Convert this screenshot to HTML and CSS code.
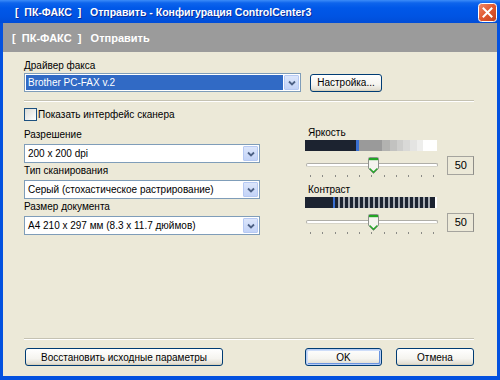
FILE: index.html
```html
<!DOCTYPE html>
<html lang="ru">
<head>
<meta charset="utf-8">
<title>ПК-ФАКС</title>
<link rel="stylesheet" href="styles.css">
</head>
<body>
<div class="window">
  <div class="titlebar">
    <span class="title">[  ПК-ФАКС  ]   Отправить - Конфигурация ControlCenter3</span>
    <span class="close">
      <svg width="19" height="19" viewBox="0 0 19 19">
        <defs>
          <linearGradient id="cg" x1="0" y1="0" x2="1" y2="1">
            <stop offset="0" stop-color="#F08A6C"/>
            <stop offset="0.5" stop-color="#E0582F"/>
            <stop offset="1" stop-color="#C2401F"/>
          </linearGradient>
        </defs>
        <rect x="0.5" y="0.5" width="18" height="18" rx="3" fill="url(#cg)" stroke="#FFFFFF"/>
        <path d="M5.5 5.5l8 8M13.5 5.5l-8 8" stroke="#FFFFFF" stroke-width="2" stroke-linecap="square"/>
      </svg>
    </span>
  </div>
  <div class="frame">
    <div class="band">[  ПК-ФАКС  ]   Отправить</div>
    <div class="content">
      <div class="label">Драйвер факса</div>
      <div class="driver-row">
        <div class="select wide active">
          <span class="value">Brother PC-FAX v.2</span>
          <span class="arrow"><svg width="8" height="6" viewBox="0 0 8 6"><path d="M1 1.5l3 3 3-3" stroke="#4D6185" stroke-width="1.8" fill="none"/></svg></span>
        </div>
        <button class="btn setup">Настройка...</button>
      </div>
      <div class="sep first"></div>
      <div class="check"><span class="box"></span><span>Показать интерфейс сканера</span></div>
      <div class="columns">
        <div class="left">
          <div class="label">Разрешение</div>
          <div class="select field">
            <span class="value">200 x 200 dpi</span>
            <span class="arrow"><svg width="8" height="6" viewBox="0 0 8 6"><path d="M1 1.5l3 3 3-3" stroke="#4D6185" stroke-width="1.8" fill="none"/></svg></span>
          </div>
          <div class="label">Тип сканирования</div>
          <div class="select field">
            <span class="value">Серый (стохастическое растрирование)</span>
            <span class="arrow"><svg width="8" height="6" viewBox="0 0 8 6"><path d="M1 1.5l3 3 3-3" stroke="#4D6185" stroke-width="1.8" fill="none"/></svg></span>
          </div>
          <div class="label">Размер документа</div>
          <div class="select field">
            <span class="value">A4 210 x 297 мм (8.3 x 11.7 дюймов)</span>
            <span class="arrow"><svg width="8" height="6" viewBox="0 0 8 6"><path d="M1 1.5l3 3 3-3" stroke="#4D6185" stroke-width="1.8" fill="none"/></svg></span>
          </div>
        </div>
        <div class="right">
          <div class="label">Яркость</div>
          <div class="bar brightness"></div>
          <div class="slider-row">
            <div class="slider">
              <div class="track"></div>
              <div class="ticks"><i></i><i></i><i></i><i></i><i></i><i></i><i></i><i></i><i></i><i></i><i></i></div>
              <svg class="thumb" width="11" height="17" viewBox="0 0 11 17">
                <path d="M1.5 0.5h8a1 1 0 0 1 1 1v10l-5 5l-5-5v-10a1 1 0 0 1 1-1z" fill="#F5F4EF" stroke="#8E918C"/>
                <rect x="1" y="1" width="9" height="2.2" fill="#22A524"/>
                <path d="M1.6 11.4l3.9 3.9 3.9-3.9" stroke="#22A524" stroke-width="1.3" fill="none"/>
              </svg>
            </div>
            <div class="num">50</div>
          </div>
          <div class="label second">Контраст</div>
          <div class="bar contrast"></div>
          <div class="slider-row">
            <div class="slider">
              <div class="track"></div>
              <div class="ticks"><i></i><i></i><i></i><i></i><i></i><i></i><i></i><i></i><i></i><i></i><i></i></div>
              <svg class="thumb" width="11" height="17" viewBox="0 0 11 17">
                <path d="M1.5 0.5h8a1 1 0 0 1 1 1v10l-5 5l-5-5v-10a1 1 0 0 1 1-1z" fill="#F5F4EF" stroke="#8E918C"/>
                <rect x="1" y="1" width="9" height="2.2" fill="#22A524"/>
                <path d="M1.6 11.4l3.9 3.9 3.9-3.9" stroke="#22A524" stroke-width="1.3" fill="none"/>
              </svg>
            </div>
            <div class="num">50</div>
          </div>
        </div>
      </div>
      <div class="sep bottom"></div>
      <div class="buttons">
        <button class="btn restore">Восстановить исходные параметры</button>
        <div class="right-btns">
          <button class="btn ok">OK</button>
          <button class="btn cancel">Отмена</button>
        </div>
      </div>
    </div>
  </div>
</div>
</body>
</html>
```

FILE: styles.css
```css
* { box-sizing: border-box; }
html, body { margin: 0; padding: 0; }
body {
  width: 500px;
  height: 380px;
  overflow: hidden;
  background: #ffffff;
  font-family: "Liberation Sans", Arial, sans-serif;
  font-size: 10px;
  color: #000;
}
.window {
  width: 500px;
  height: 380px;
  display: flex;
  flex-direction: column;
  background: #0054E3;
}
.titlebar {
  height: 23px;
  flex: none;
  display: flex;
  align-items: center;
  justify-content: space-between;
  padding: 0 3px 0 15px;
  background: linear-gradient(#3C8CF8 0px, #0D64EC 3px, #0058E8 8px, #0054E3 16px, #004DD8 23px);
}
.title {
  color: #fff;
  font-weight: bold;
  font-size: 10.5px;
  white-space: pre;
  text-shadow: 1px 1px 0 #0A2C9A;
  padding-top: 1px;
}
.close { display: flex; margin-top: 1px; }
.frame {
  flex: 1;
  display: flex;
  flex-direction: column;
  border: 3px solid #0351DF;
  border-top: 0;
  border-bottom-width: 4px;
  background: #ECE9D8;
}
.band {
  height: 29px;
  flex: none;
  background: #9B9B9B;
  color: #fff;
  font-weight: bold;
  font-size: 11px;
  white-space: pre;
  display: flex;
  align-items: center;
  padding-left: 9px;
}
.content {
  flex: 1;
  display: flex;
  flex-direction: column;
  padding: 7px 23px 10px 21px;
}
.label {
  height: 14px;
  line-height: 14px;
}
.driver-row {
  display: flex;
  align-items: center;
  gap: 9px;
}
.select {
  height: 19px;
  border: 1px solid #7F9DB9;
  background: #fff;
  display: flex;
  padding: 1px;
}
.select.wide { width: 277px; }
.select.field { width: 236px; margin: 2px 0 1px; }
.select .value {
  flex: 1;
  padding-left: 2px;
  line-height: 15px;
  white-space: nowrap;
  overflow: hidden;
}
.select.active .value {
  background: #316AC5;
  color: #fff;
  margin-right: 1px;
}
.select .arrow {
  width: 15px;
  display: flex;
  align-items: center;
  justify-content: center;
  background: linear-gradient(#DCE6FB, #C3D3F7);
  border: 1px solid #B6C9F3;
  border-radius: 1px;
}
.btn {
  font-family: "Liberation Sans", Arial, sans-serif;
  font-size: 10px;
  color: #000;
  height: 18px;
  padding: 0;
  border: 1px solid #003C74;
  border-radius: 3px;
  background: linear-gradient(#FFFFFF 0%, #F5F4EF 60%, #E3E0D5 90%, #D6D0C5 100%);
  box-shadow: inset 0 -1px 0 #D8D2BD;
  line-height: 15px;
}
.btn.setup { width: 72px; }
.sep {
  height: 2px;
  border-top: 1px solid #C5C2B2;
  border-bottom: 1px solid #FFFFFF;
}
.sep.first { margin-top: 8px; }
.sep.bottom { margin-top: auto; }
.check {
  display: flex;
  align-items: center;
  height: 13px;
  margin-top: 6px;
}
.check .box {
  width: 13px;
  height: 13px;
  border: 1px solid #1C5180;
  background: linear-gradient(135deg, #DCDCD7, #FFFFFF);
  margin-right: 1px;
}
.columns {
  display: flex;
  align-items: flex-start;
  gap: 45px;
  margin-top: 7px;
}
.left { width: 236px; display: flex; flex-direction: column; }
.right { display: flex; flex-direction: column; margin-top: -2px; }
.right .label { padding-left: 3px; }
.right .label.second { margin-top: 3px; }
.bar {
  width: 132px;
  height: 11px;
}
.bar.brightness {
  background: linear-gradient(90deg,
    #1C2330 0 51px, #3A70D2 51px 54px,
    #9A9A9A 54px 77px, #B2B2B0 77px 85px, #C2C2C0 85px 92px,
    #CECECC 92px 98px, #D9D9D7 98px 105px, #E4E4E2 105px 112px,
    #EEEEEC 112px 118px, #FFFFFF 118px 132px);
}
.bar.contrast {
  background:
    linear-gradient(90deg, #1C2330 0 28px, #3A70D2 28px 30px, transparent 30px 128px, #1C2330 128px 130px, #FFFFFF 130px 132px),
    repeating-linear-gradient(90deg, #1C2330 0 3px, #A9ADB3 3px 5px);
}
.slider-row {
  display: flex;
  align-items: flex-start;
  gap: 9px;
  height: 29px;
}
.slider {
  position: relative;
  width: 133px;
  height: 29px;
}
.track {
  margin: 12px 0 0 1px;
  height: 4px;
  border: 1px solid #AFAEA8;
  border-bottom-color: #D6D4C8;
  border-radius: 2px;
  background: #FFFFFF;
}
.ticks {
  display: flex;
  justify-content: space-between;
  padding: 0 4px 0 5px;
  margin-top: 8px;
}
.ticks i {
  display: block;
  width: 1px;
  height: 2px;
  background: #8A8A86;
}
.thumb {
  position: absolute;
  left: 63px;
  top: 6px;
}
.num {
  width: 27px;
  height: 19px;
  margin-top: 5px;
  border: 1px solid #A5A49E;
  border-right-color: #8E8D88;
  text-align: right;
  padding-right: 6px;
  font-size: 11px;
  line-height: 17px;
  background: #ECE9D8;
}
.buttons {
  display: flex;
  justify-content: space-between;
  margin-top: 8px;
  padding-left: 1px;
}
.btn.restore { width: 198px; }
.right-btns { display: flex; gap: 14px; }
.btn.ok {
  width: 77px;
  box-shadow: inset 0 0 0 1px #B7CDF5, inset 1px 1px 0 1px #CEDDF9, inset -1px -1px 0 1px #6A94E0;
}
.btn.cancel { width: 78px; }
```
